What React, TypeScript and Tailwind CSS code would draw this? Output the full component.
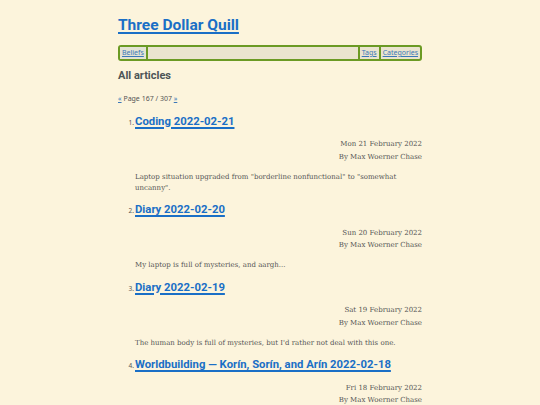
const articles = [
  {
    n: 1,
    title: 'Coding 2022-02-21',
    date: 'Mon 21 February 2022',
    summary: 'Laptop situation upgraded from "borderline nonfunctional" to "somewhat uncanny".',
  },
  {
    n: 2,
    title: 'Diary 2022-02-20',
    date: 'Sun 20 February 2022',
    summary: 'My laptop is full of mysteries, and aargh...',
  },
  {
    n: 3,
    title: 'Diary 2022-02-19',
    date: 'Sat 19 February 2022',
    summary: "The human body is full of mysteries, but I'd rather not deal with this one.",
  },
  {
    n: 4,
    title: 'Worldbuilding — Korín, Sorín, and Arín 2022-02-18',
    date: 'Fri 18 February 2022',
    summary: '',
  },
]

const sans = "font-['Noto_Sans','Open_Sans',sans-serif]"
const head = "font-['Roboto','Noto_Sans',sans-serif]"
const serif = "font-['DejaVu_Serif','Liberation_Serif',serif]"

export default function App() {
  return (
    <div className="min-h-[405px] w-full overflow-hidden bg-[#fcf4dc]">
      <div className="mx-auto w-[304px] pt-[15px]">
        <h1 className={`${head} text-[15.5px] font-bold leading-[20px]`}>
          <a href="#" className="text-[#1a6fc6] underline decoration-[1.5px] underline-offset-2">
            Three Dollar Quill
          </a>
        </h1>

        <nav
          className={`${sans} mt-[10px] flex h-[16px] items-stretch rounded-[3px] border-2 border-[#6b9a24] bg-[#eae4cf] text-[7px] leading-[12px]`}
        >
          <a href="#" className="border-r-2 border-[#6b9a24] bg-[#e3e3d4] px-[2px] text-[#3b78b8] underline">
            Beliefs
          </a>
          <div className="flex-1" />
          <a href="#" className="border-l-2 border-[#6b9a24] px-[2px] text-[#3b78b8] underline">
            Tags
          </a>
          <a href="#" className="border-l-2 border-[#6b9a24] px-[2px] text-[#3b78b8] underline">
            Categories
          </a>
        </nav>

        <h2 className={`${head} mt-[8px] text-[11px] font-bold leading-[14px] text-[#4d5456]`}>
          All articles
        </h2>

        <p className={`${sans} mt-[11px] text-[7px] leading-[10px] text-[#555]`}>
          <a href="#" className="text-[#3b78b8] underline">«</a> Page 167 / 307{' '}
          <a href="#" className="text-[#3b78b8] underline">»</a>
        </p>

        <ol className="mt-[9.5px] flex flex-col pl-[17px]">
          {articles.map((a) => (
            <li key={a.n} className="mb-[8.5px]">
              <div className="flex items-baseline">
                <span className={`${sans} -ml-[8px] mr-[1px] w-[7px] shrink-0 text-right text-[6.5px] text-[#555]`}>
                  {a.n}.
                </span>
                <a
                  href="#"
                  className={`${head} text-[11.3px] font-bold leading-[16px] text-[#1a6fc6] underline decoration-[1.5px] underline-offset-2`}
                >
                  {a.title}
                </a>
              </div>
              <div className={`${serif} mt-[8.5px] text-right text-[7px] leading-[12.5px] text-[#555]`}>
                <div>{a.date}</div>
                <div>By Max Woerner Chase</div>
              </div>
              {a.summary && (
                <p className={`${serif} mt-[8.5px] pr-[20px] text-[7px] leading-[11px] text-[#555]`}>
                  {a.summary}
                </p>
              )}
            </li>
          ))}
        </ol>
      </div>
    </div>
  )
}
